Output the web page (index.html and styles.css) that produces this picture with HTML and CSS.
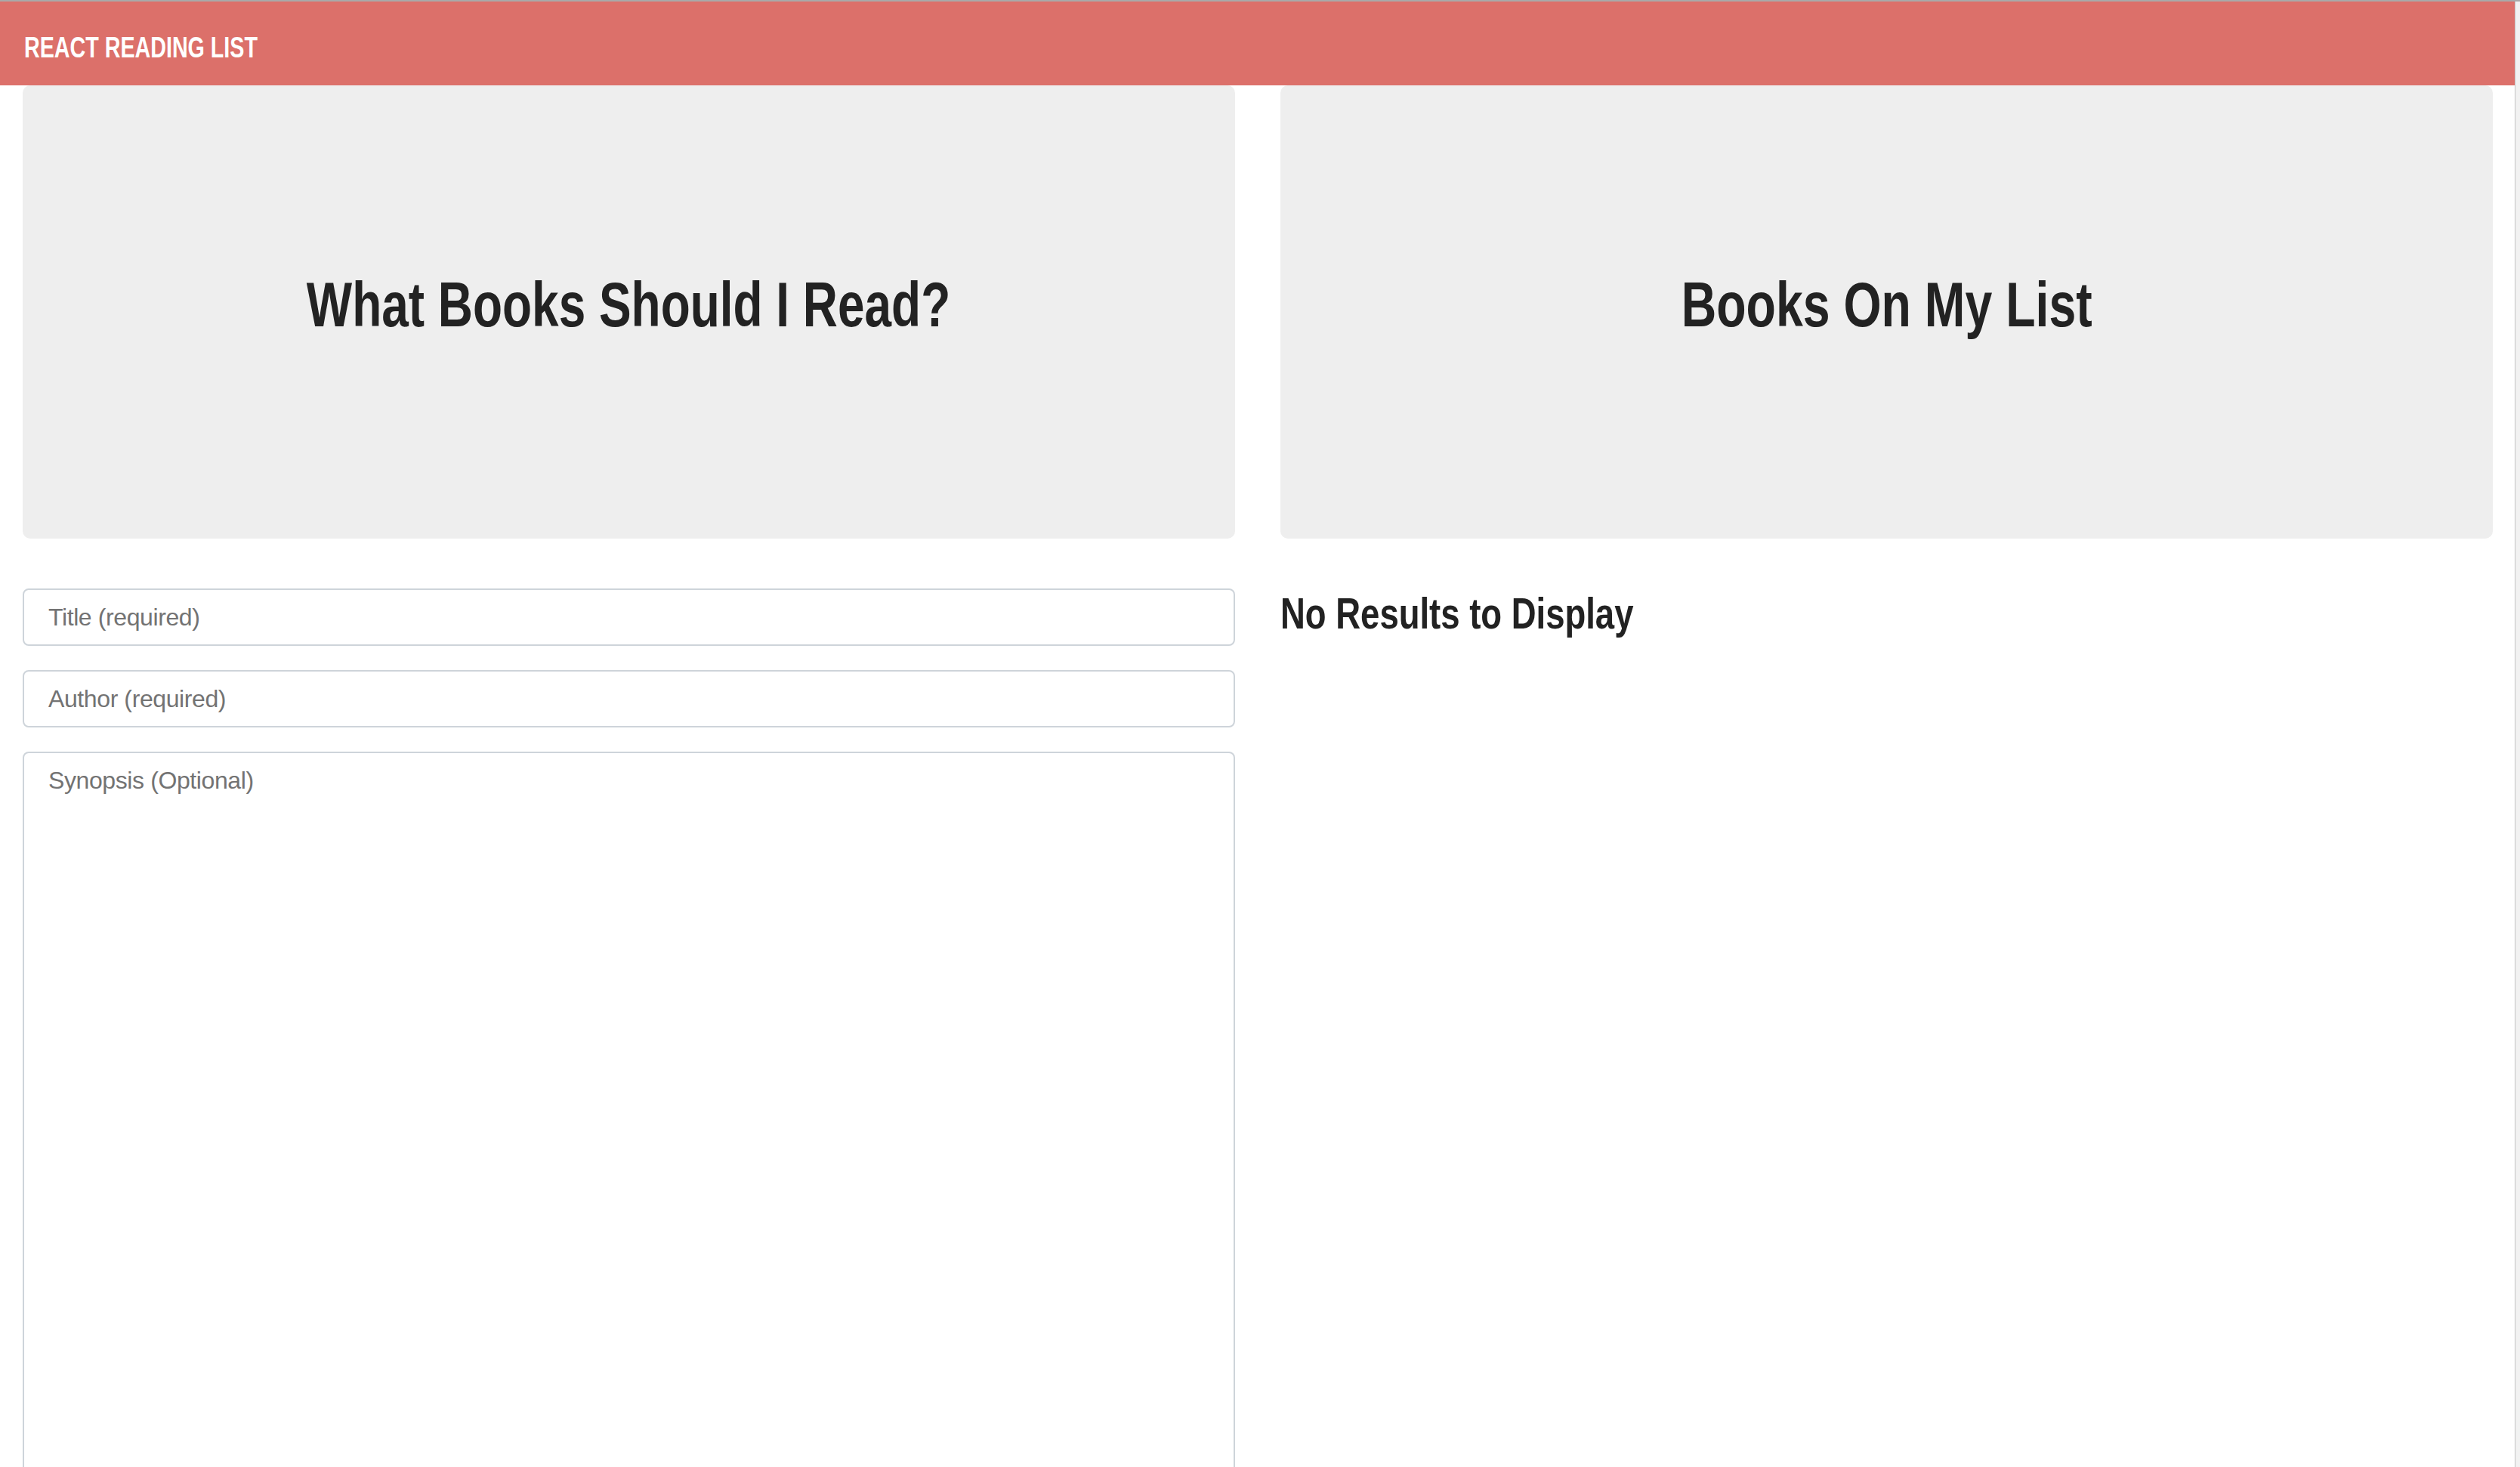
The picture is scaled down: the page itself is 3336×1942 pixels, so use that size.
FILE: index.html
```html
<!DOCTYPE html>
<html lang="en">
<head>
<meta charset="utf-8">
<title>React Reading List</title>
<link rel="stylesheet" href="styles.css">
</head>
<body>
<div class="page">
  <nav class="navbar">
    <span class="brand condensed">REACT READING LIST</span>
  </nav>
  <main class="container">
    <section class="col">
      <div class="jumbotron">
        <h1 class="jumbo-title"><span class="condensed center tight">What Books Should I Read?</span></h1>
      </div>
      <form class="book-form">
        <div class="form-group"><input class="form-control" type="text" placeholder="Title (required)"></div>
        <div class="form-group"><input class="form-control" type="text" placeholder="Author (required)"></div>
        <div class="form-group"><textarea class="form-control textarea" placeholder="Synopsis (Optional)"></textarea></div>
      </form>
    </section>
    <section class="col">
      <div class="jumbotron">
        <h1 class="jumbo-title"><span class="condensed center">Books On My List</span></h1>
      </div>
      <h3 class="empty"><span class="condensed wide">No Results to Display</span></h3>
    </section>
  </main>
</div>
<div class="edge"></div>
</body>
</html>
```
FILE: styles.css
```css
html, body {
  margin: 0;
  padding: 0;
  height: 100%;
  overflow: hidden;
}
body {
  display: flex;
  border-top: 2px solid #a9a9a9;
  box-sizing: border-box;
  background: #ffffff;
  font-family: "Liberation Sans", Arial, sans-serif;
  color: #222222;
}
.page {
  width: 3329px;
  flex: none;
  background: #ffffff;
}
.edge {
  flex: 1;
  border-left: 1px solid #c2c2c2;
  background: #f2f2f2;
}
.condensed {
  display: inline-block;
  transform: scaleX(0.767);
  transform-origin: left center;
  white-space: nowrap;
}
.condensed.center {
  transform-origin: center center;
}
.condensed.tight {
  transform: scaleX(0.761);
}
.condensed.wide {
  transform: scaleX(0.784);
}
.navbar {
  background: #dc706a;
  height: 111px;
  box-sizing: border-box;
  padding: 41px 0 31px 32px;
}
.brand {
  color: #ffffff;
  font-weight: 700;
  font-size: 39px;
  line-height: 39px;
  transform: scaleX(0.735);
}
.container {
  padding: 0 29px 0 30px;
  display: grid;
  grid-template-columns: 1fr 1fr;
  column-gap: 60px;
}
.col {
  min-width: 0;
}
.jumbotron {
  background: #eeeeee;
  border-radius: 10px;
  height: 600px;
  box-sizing: border-box;
  padding-top: 240px;
  text-align: center;
}
.jumbo-title {
  margin: 0;
  font-size: 84px;
  line-height: 100px;
  font-weight: 700;
  color: #222222;
}
.book-form {
  margin-top: 66px;
}
.form-group {
  margin-bottom: 32px;
}
.form-control {
  display: block;
  width: 100%;
  box-sizing: border-box;
  height: 76px;
  padding: 12px 24px 12px 32px;
  border: 2px solid #ced4da;
  border-radius: 8px;
  font-family: "Liberation Sans", Arial, sans-serif;
  font-size: 32px;
  line-height: 48px;
  letter-spacing: -0.4px;
  color: #495057;
  background: #ffffff;
  outline: none;
}
.form-control::placeholder {
  color: #737373;
  opacity: 1;
}
.textarea {
  height: 1000px;
  resize: none;
}
.empty {
  margin: 64px 0 0 0;
  font-size: 58px;
  line-height: 70px;
  font-weight: 700;
  color: #222222;
}
```
